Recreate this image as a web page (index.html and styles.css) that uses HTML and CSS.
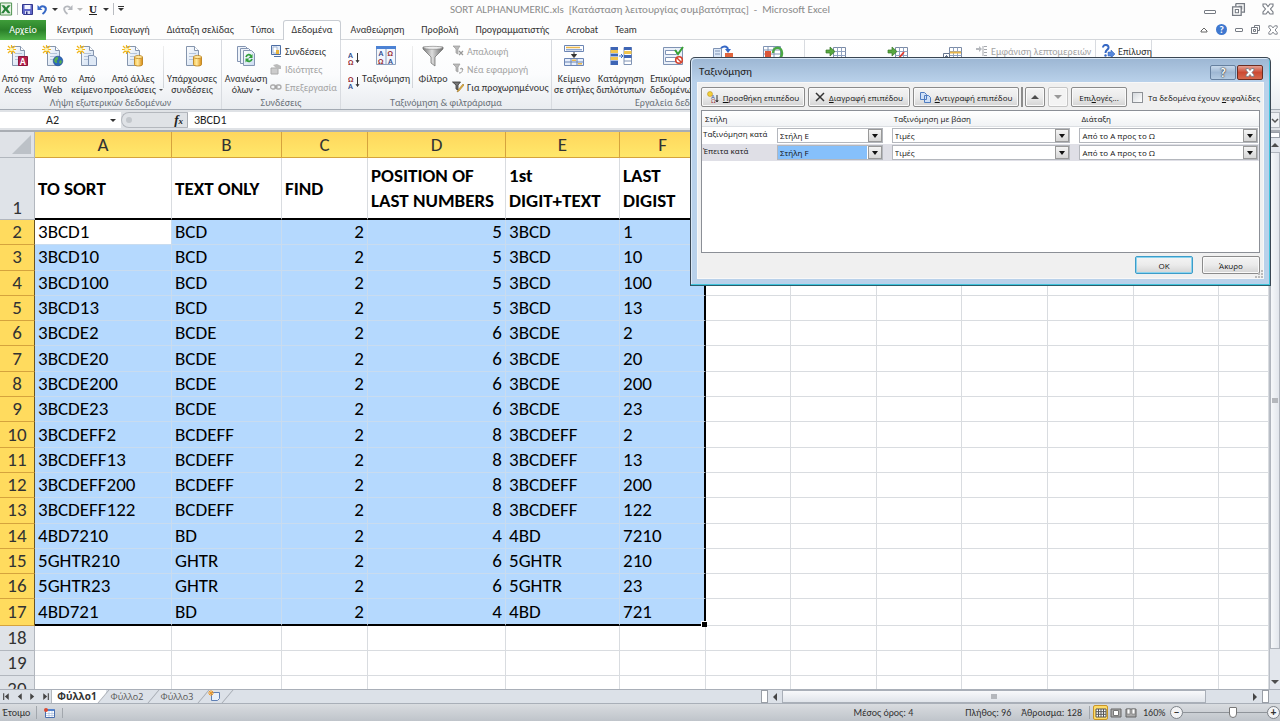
FILE: index.html
```html
<!DOCTYPE html>
<html lang="el">
<head>
<meta charset="utf-8">
<title>SORT ALPHANUMERIC.xls - Microsoft Excel</title>
<link rel="stylesheet" href="styles.css">
</head>
<body>
<svg class="defs" aria-hidden="true">
  <defs>
    <linearGradient id="pageFill" x1="0" y1="0" x2="1" y2="1"><stop offset="0" stop-color="#fff"/><stop offset="1" stop-color="#c9daf0"/></linearGradient>
    <linearGradient id="gold" x1="0" x2="1"><stop offset="0" stop-color="#f7c64f"/><stop offset=".4" stop-color="#ffe9a0"/><stop offset="1" stop-color="#d98c10"/></linearGradient>
    <linearGradient id="steel" x1="0" x2="1"><stop offset="0" stop-color="#777"/><stop offset=".45" stop-color="#ddd"/><stop offset="1" stop-color="#666"/></linearGradient>
    <symbol id="page" viewBox="0 0 22 22"><path d="M5.500 1.500h8l4 4v15h-12z" fill="url(#pageFill)" stroke="#8595ad"/><path d="M13.500 1.500v4h4" fill="#fff" stroke="#8595ad"/><path d="M8 8.500h7M8 11.500h7M8 14.500h7" stroke="#b4c4da"/></symbol>
    <symbol id="star" viewBox="0 0 22 22"><path d="M4.500 0v9M0 4.500h9M1 1l7 7M8 1l-7 7" stroke="#f1b51c" stroke-width="1.200"/><circle cx="4.500" cy="4.500" r="1.800" fill="#fff6b0"/></symbol>
    <symbol id="drum" viewBox="0 0 22 22"><path d="M12.500 12v7.500c0 2 8 2 8 0V12z" fill="url(#gold)" stroke="#b67a13" stroke-width=".8"/><ellipse cx="16.500" cy="12" rx="4" ry="1.600" fill="#ffe59a" stroke="#b67a13" stroke-width=".7"/></symbol>
    <symbol id="arrow" viewBox="0 0 22 22"><path d="M1 5h4V2l5 4.500L5 11V8H1z" fill="#58a83f" stroke="#37782a" stroke-width=".7"/></symbol>
    <symbol id="sheet" viewBox="0 0 22 22"><path d="M8.500 2.500h12v17h-12z" fill="#fff" stroke="#7b8ba6"/><path d="M8.500 6.500h12M8.500 10.500h12M8.500 14.500h12M12.500 2.500v17M16.500 2.500v17" stroke="#92a4c2"/></symbol>
    <symbol id="funnel" viewBox="0 0 22 22"><path d="M1 2h20v2l-8 8v9l-4-3v-6L1 4z" fill="url(#steel)" stroke="#777" stroke-width=".8"/><ellipse cx="11" cy="2.800" rx="9.500" ry="1.500" fill="#eee" stroke="#888" stroke-width=".6"/></symbol>
    <symbol id="sortAz" viewBox="0 0 12 14"><text x="0" y="6.500" font-size="8" font-weight="700" fill="#2d4b8c">Α</text><text x="0" y="14" font-size="8" font-weight="700" fill="#9b3238">Ω</text><path d="M9.500 2v9M8 9l1.500 2.500L11 9" stroke="#333" fill="none"/></symbol>
    <symbol id="sortZa" viewBox="0 0 12 14"><text x="0" y="6.500" font-size="8" font-weight="700" fill="#9b3238">Ω</text><text x="0" y="14" font-size="8" font-weight="700" fill="#2d4b8c">Α</text><path d="M9.500 2v9M8 9l1.500 2.500L11 9" stroke="#333" fill="none"/></symbol>
    <symbol id="restore" viewBox="0 0 14 14"><path d="M4.500 1.500h8v8h-3M4.500 1.500v3" fill="none" stroke="#767b83" stroke-width="1.200"/><path d="M1.500 4.500h8v8h-8z" fill="#fff" stroke="#767b83" stroke-width="1.200"/><path d="M4 7h3v3H4zM7 4h3v3" fill="none" stroke="#767b83"/></symbol>
    <symbol id="cross" viewBox="0 0 14 14"><path d="M2 2h3l2 2.500L9 2h3v2L9.500 7l2.500 3v2H9L7 9.500 5 12H2v-2l2.500-3L2 4z" fill="#fff" stroke="#767b83" stroke-width="1.100"/></symbol>
  </defs>
</svg>

<div class="app">
  <header class="titlebar">
    <div class="quick">
      <svg class="logo" viewBox="0 0 14 14"><path d="M.5.500h12v13H.5z" fill="#e7f2e4" stroke="#438b45"/><path d="M1.500 3l3 0 2 2.500L8.500 3h3L8 7l3.500 4.500h-3L6 8.500 4 11.500H1L4.500 7z" fill="#278238"/></svg>
      <i class="vline"></i>
      <button aria-label="Αποθήκευση"><svg width="11" height="11" viewBox="0 0 11 11"><path d="M.5.500h10v10h-9l-1-1z" fill="#5f66c7" stroke="#34398e"/><path d="M2.500 1h6v4h-6z" fill="#f4f6ff"/><path d="M3 7h5v3H3z" fill="#d7dcf5"/><path d="M4 7.500h1.500V10H4z" fill="#2c3180"/></svg></button>
      <button aria-label="Αναίρεση"><svg width="11" height="11" viewBox="0 0 11 11"><path d="M3 3.500C6 1 10 3 8.500 6.500 8 8 7 9 5.500 10" fill="none" stroke="#3567c5" stroke-width="2"/><path d="M.5 1v5h5z" fill="#3567c5"/></svg></button>
      <i class="caret"></i>
      <button aria-label="Επανάληψη"><svg width="11" height="11" viewBox="0 0 11 11"><path d="M8 3.500C5 1 1 3 2.500 6.500 3 8 4 9 5.500 10" fill="none" stroke="#b5b8bd" stroke-width="1.800"/><path d="M10.500 1v5h-5z" fill="#b5b8bd"/></svg></button>
      <i class="caret pale"></i>
      <button class="under" aria-label="Υπογράμμιση">U</button>
      <i class="caret"></i>
      <i class="vline"></i>
      <i class="caret bar"></i>
    </div>
    <h1>SORT ALPHANUMERIC.xls&nbsp; [Κατάσταση λειτουργίας συμβατότητας]&nbsp; -&nbsp; Microsoft Excel</h1>
    <div class="wincontrols">
      <button aria-label="Ελαχιστοποίηση"><i class="min"></i></button>
      <button aria-label="Επαναφορά"><svg width="15" height="15"><use href="#restore"/></svg></button>
      <button aria-label="Κλείσιμο"><svg width="14" height="14"><use href="#cross"/></svg></button>
    </div>
  </header>

  <nav class="tabs">
    <a href="#" class="file">Αρχείο</a>
    <a href="#">Κεντρική</a>
    <a href="#">Εισαγωγή</a>
    <a href="#">Διάταξη σελίδας</a>
    <a href="#">Τύποι</a>
    <a href="#" class="active">Δεδομένα</a>
    <a href="#">Αναθεώρηση</a>
    <a href="#">Προβολή</a>
    <a href="#">Προγραμματιστής</a>
    <a href="#">Acrobat</a>
    <a href="#">Team</a>
    <div class="doccontrols">
      <button aria-label="Σύμπτυξη κορδέλας"><svg width="8" height="8" viewBox="0 0 8 8"><path d="M1 5l3-3 3 3v1H1z" fill="#fff" stroke="#666"/></svg></button>
      <button class="help" aria-label="Βοήθεια">?</button>
      <button aria-label="Ελαχιστοποίηση βιβλίου"><i class="min"></i></button>
      <button aria-label="Επαναφορά βιβλίου"><svg width="9" height="9" viewBox="0 0 9 9"><path d="M3.500 2.500v-2h5v5h-2M.5 2.500h6v6h-6zM2.500 4.500h2v2h-2z" fill="#fff" stroke="#767b83"/></svg></button>
      <button aria-label="Κλείσιμο βιβλίου"><svg width="10" height="10" viewBox="1 1 12 12"><use href="#cross" width="14" height="14"/></svg></button>
    </div>
  </nav>

  <section class="ribbon">
    <div class="group g1">
      <div class="tools">
        <button class="big w36"><svg viewBox="0 0 22 22"><use href="#page"/><use href="#star"/><path d="M11.500 11.500h9v9h-9z" fill="#b5224f" stroke="#8b1539"/><text x="12.800" y="19.500" font-size="10" font-weight="700" fill="#fff">A</text></svg>Από την<br>Access</button>
        <button class="big w34"><svg viewBox="0 0 22 22"><use href="#page"/><use href="#star"/><circle cx="16" cy="16" r="4.800" fill="#2c67ba" stroke="#214c8c" stroke-width=".6"/><path d="M13 13c2-2 4-1 3 1s-2 1-1 3-2 1-3-1zM18 15l2 1-1 3-2-1z" fill="#55b04b"/></svg>Από το<br>Web</button>
        <button class="big w34"><svg viewBox="0 0 22 22"><use href="#page"/><use href="#star"/><path d="M12.500 10.500h5l3 2v8h-8z" fill="#dfe9f6" stroke="#7f93b3"/></svg>Από<br>κείμενο</button>
        <button class="big w58"><svg viewBox="0 0 22 22"><use href="#page"/><use href="#star"/><use href="#drum"/></svg>Από άλλες<br>προελεύσεις <i class="drop"></i></button>
        <i class="sep"></i>
        <button class="big w54"><svg viewBox="0 0 22 22"><use href="#page"/><use href="#drum"/></svg>Υπάρχουσες<br>συνδέσεις</button>
      </div>
      <div class="caption">Λήψη εξωτερικών δεδομένων</div>
    </div>
    <div class="group g2">
      <div class="tools">
        <button class="big w48"><svg viewBox="0 0 22 22"><path d="M2.500 1.500h8l3 3v12h-11z" fill="#eef3fa" stroke="#8495b2"/><path d="M5.500 3.500h8l3 3v12h-11z" fill="#eef3fa" stroke="#8495b2"/><path d="M8.500 5.500h8l3 3v12h-11z" fill="url(#pageFill)" stroke="#8495b2"/><path d="M11 12c1-3 4-3 5-1M17 14c-1 3-4 3-5 1" fill="none" stroke="#33a03c" stroke-width="1.800"/><path d="M17.500 9v4h-4zM10.500 17.500v-4h4z" fill="#33a03c"/></svg>Ανανέωση<br>όλων <i class="drop"></i></button>
        <div class="stack">
          <button><svg viewBox="0 0 12 12"><path d="M1.500.500h9v9h-9z" fill="#e4edf9" stroke="#4d6ea4"/><path d="M3 2h4v6H3z" fill="#fff" stroke="#7790b8" stroke-width=".6"/><path d="M6 5h3v4H6z" fill="#e8b33b"/><path d="M4 11.500h7" stroke="#4d6ea4"/></svg>Συνδέσεις</button>
          <button disabled><svg viewBox="0 0 12 12"><path d="M1 5h7v6H1z" fill="#ccc" stroke="#aaa"/><path d="M3 2l4-1 4 2v3H7L5 4z" fill="#bbb"/></svg>Ιδιότητες</button>
          <button disabled><svg viewBox="0 0 12 12"><rect x=".6" y="4" width="5" height="4" rx="2" fill="none" stroke="#aaa" stroke-width="1.300"/><rect x="6" y="4" width="5" height="4" rx="2" fill="none" stroke="#aaa" stroke-width="1.300"/><path d="M4 6h4" stroke="#999"/></svg>Επεξεργασία</button>
        </div>
      </div>
      <div class="caption">Συνδέσεις</div>
    </div>
    <div class="group g3">
      <div class="tools">
        <div class="sorts">
          <button aria-label="Αύξουσα ταξινόμηση"><svg width="12" height="14"><use href="#sortAz"/></svg></button>
          <button aria-label="Φθίνουσα ταξινόμηση"><svg width="12" height="14"><use href="#sortZa"/></svg></button>
        </div>
        <button class="big w50"><svg viewBox="0 0 22 22"><path d="M1.500 1.500h19v18h-19z" fill="#f2f6fd" stroke="#8da0bd"/><path d="M1 1h20v3H1z" fill="#4c82d4"/><path d="M11 4v15" stroke="#8da0bd"/><text x="3.500" y="11" font-size="8" font-weight="700" fill="#2d4b8c">Α</text><text x="3" y="18.500" font-size="8" font-weight="700" fill="#9b3238">Ω</text><text x="12.500" y="11" font-size="8" font-weight="700" fill="#9b3238">Ω</text><text x="13" y="18.500" font-size="8" font-weight="700" fill="#2d4b8c">Α</text></svg>Ταξινόμηση</button>
        <i class="sep"></i>
        <button class="big w38"><svg viewBox="0 0 22 22"><use href="#funnel"/></svg>Φίλτρο</button>
        <div class="stack">
          <button disabled><svg viewBox="0 0 12 12"><path d="M1 1h7L6 4v5L4 8V4z" fill="#bbb" stroke="#999" stroke-width=".7"/><path d="M7 6l4 4M11 6l-4 4" stroke="#999" stroke-width="1.300"/></svg>Απαλοιφή</button>
          <button disabled><svg viewBox="0 0 12 12"><path d="M1 1h7L6 4v5L4 8V4z" fill="#bbb" stroke="#999" stroke-width=".7"/><path d="M7 10c3 0 4-2 3-4M8 6l2-1 1 2" stroke="#999" fill="none"/></svg>Νέα εφαρμογή</button>
          <button><svg viewBox="0 0 12 12"><path d="M.5 1h8L6 4v5L4 8V4z" fill="#777" stroke="#333" stroke-width=".8"/><path d="M11 3L6 9l-1 2 2-1 5-6z" fill="#e8b83e" stroke="#8a5d14" stroke-width=".5"/></svg>Για προχωρημένους</button>
        </div>
      </div>
      <div class="caption">Ταξινόμηση &amp; φιλτράρισμα</div>
    </div>
    <div class="group g4">
      <div class="tools">
        <button class="big w44"><svg viewBox="0 0 22 22"><path d="M1.500.500h19v6h-19z" fill="#fff" stroke="#6b85b4"/><path d="M3 2.500h14" stroke="#e9b64b" stroke-width="1.500"/><path d="M3 4.800h16" stroke="#5e83c1"/><path d="M11 7v4M8.500 9.500l2.500 3 2.500-3z" stroke="#333" fill="#333"/><path d="M1.500 13.500h19v7h-19zM1.500 17h19M8 13.500v7M14 13.500v7" fill="#e6eefb" stroke="#6b85b4"/><path d="M9 15.200h4M15 18.800h4" stroke="#e9b64b" stroke-width="1.500"/></svg>Κείμενο<br>σε στήλες</button>
        <button class="big w50"><svg viewBox="0 0 22 22"><path d="M.5 2h7.500v18H.5z" fill="#3e65b5"/><path d="M.5 5h7.500v3H.5zM.5 12h7.500v3H.5z" fill="#f1c44d"/><path d="M.5 8.500h8M.5 15.500h8M.5 11.500h8" stroke="#d8e3f7" stroke-width=".7"/><path d="M9 11h3M11 9l2 2-2 2" stroke="#3268c5" fill="none"/><path d="M14 2.500h7.500v17H14z" fill="#fff" stroke="#8194b5"/><path d="M14 2h7.500v3H14z" fill="#3e65b5"/><path d="M14 6h7.500v3H14z" fill="#f1c44d"/><path d="M14 10h7.500v3H14z" fill="#3e65b5"/><path d="M14 16h7.500" stroke="#8194b5"/></svg>Κατάργηση<br>διπλότυπων</button>
        <button class="big w54"><svg viewBox="0 0 22 22"><path d="M1.500 2.500h19v17h-19z" fill="#eaf0f9" stroke="#7f93b3"/><path d="M3.500 5.500h11v4h-11zM3.500 12.500h11v4h-11z" fill="#fff" stroke="#8194b5"/><path d="M13 5l3 4 5-7" fill="none" stroke="#37a234" stroke-width="2"/><circle cx="17" cy="15" r="3.300" fill="#fff" stroke="#d4412c" stroke-width="1.600"/><path d="M15 13l4 4" stroke="#d4412c" stroke-width="1.400"/></svg>Επικύρωση<br>δεδομένων</button>
        <button class="big w46" aria-label="Συνάθροιση"><svg viewBox="0 0 22 22"><path d="M1.500 3.500h8v16h-8z" fill="#dce8f8" stroke="#7f93b3"/><path d="M3 6h5M3 9h5" stroke="#7f93b3"/><path d="M9 3c4-3 7-1 7 2" stroke="#3567c5" stroke-width="2" fill="none"/><path d="M13 4h6l-3 4z" fill="#3567c5"/><path d="M13 8h8v12h-8z" fill="#e0643c"/></svg></button>
        <button class="big w54" aria-label="Ανάλυση"><svg viewBox="0 0 22 22"><path d="M1.500 1.500h17v18h-17zM1.500 5h17M1.500 9h17M6 1v18M12 1v18" fill="#fff" stroke="#7f93b3"/><path d="M3 6h6v6H3z" fill="#dc5638"/><path d="M11 8c0-7 9-7 9 0s-4 4-5 8" stroke="#4aa744" stroke-width="2.500" fill="none"/></svg></button>
      </div>
      <div class="caption">Εργαλεία δεδομένων</div>
    </div>
    <div class="group g5">
      <div class="tools">
        <button class="big w62" aria-label="Ομαδοποίηση"><svg viewBox="0 0 22 22"><use href="#sheet"/><use href="#arrow"/></svg></button>
        <button class="big w62" aria-label="Κατάργηση ομαδοποίησης"><svg viewBox="0 0 22 22"><use href="#sheet"/><use href="#arrow"/><path d="M7 19L17 7" stroke="#e33b2f" stroke-width="1.800"/></svg></button>
        <button class="big w46" aria-label="Μερικό άθροισμα"><svg viewBox="0 0 22 22"><use href="#sheet"/><path d="M2.500 8.500h6v6h-6zM4 11.500h3M5.500 10v3" fill="#fff" stroke="#66758d"/><path d="M9 7.500h11" stroke="#e9b64b" stroke-width="2"/></svg></button>
        <div class="stack">
          <button disabled><svg viewBox="0 0 12 12"><path d="M0 3h3V1l3 3-3 3V5H0z" fill="#b5b8bd"/><path d="M8 1.500h3M8 4.500h3M8 7.500h3M8 10.500h3M7 1v10" stroke="#a5a8ad" fill="none"/></svg>Εμφάνιση λεπτομερειών</button>
        </div>
      </div>
    </div>
    <div class="group g6">
      <div class="tools">
        <div class="stack">
          <button><svg class="solve" viewBox="0 0 14 14"><path d="M2 3.500C2 0 8 0 7.500 4 7 6 4.500 6 4.500 9" fill="none" stroke="#3668c4" stroke-width="2"/><circle cx="4.500" cy="11.500" r="1.200" fill="#3668c4"/><path d="M7 8h3V6l4 4-4 4v-2H7z" fill="#5587dc" stroke="#2d5cb0" stroke-width=".5"/></svg>Επίλυση</button>
        </div>
      </div>
    </div>
  </section>

  <div class="formulabar">
    <label class="namebox"><input aria-label="Πλαίσιο ονόματος" value="A2"><i class="caret"></i></label>
    <div class="fxpad"><i class="knob"></i><button aria-label="Εισαγωγή συνάρτησης"><em>f</em>x</button></div>
    <input class="formula" aria-label="Γραμμή τύπων" value="3BCD1">
    <button class="expand" aria-label="Ανάπτυξη γραμμής τύπων"><svg width="8" height="6" viewBox="0 0 8 6"><path d="M1 1l3 3 3-3" fill="none" stroke="#555" stroke-width="1.500"/></svg></button>
  </div>

  <main class="work">
    <div class="gridwrap">
      <table class="grid">
        <colgroup><col class="c35"><col class="c137"><col class="c110"><col class="c86"><col class="c138"><col class="c114"><col class="c86"><col class="c85"><col class="c86"><col class="c85"><col class="c86"><col class="c86"><col class="c85"><col></colgroup>
        <thead><tr id="letters"></tr></thead>
        <tbody id="cells"></tbody>
      </table>
    </div>
    <div class="vscroll">
      <i class="split"></i>
      <button aria-label="Κύλιση επάνω"><i class="tri up"></i></button>
      <div class="thumb"><i class="grip"></i></div>
      <div class="rest"></div>
      <button aria-label="Κύλιση κάτω"><i class="tri down"></i></button>
    </div>
  </main>

  <div class="sheetbar">
    <div class="sheetnav">
      <button aria-label="Πρώτο φύλλο"><svg viewBox="0 0 8 8"><path d="M1.500 1v6" stroke="#444"/><path d="M6 1v6L2.500 4z" fill="#444"/></svg></button>
      <button aria-label="Προηγούμενο φύλλο"><svg viewBox="0 0 8 8"><path d="M6 1v6L2.500 4z" fill="#444"/></svg></button>
      <button aria-label="Επόμενο φύλλο"><svg viewBox="0 0 8 8"><path d="M2 1v6l3.500-3z" fill="#444"/></svg></button>
      <button aria-label="Τελευταίο φύλλο"><svg viewBox="0 0 8 8"><path d="M6.500 1v6" stroke="#444"/><path d="M2 1v6l3.500-3z" fill="#444"/></svg></button>
    </div>
    <a href="#" class="sheet current">Φύλλο1</a>
    <a href="#" class="sheet">Φύλλο2</a>
    <a href="#" class="sheet">Φύλλο3</a>
    <a href="#" class="sheet new" aria-label="Εισαγωγή φύλλου"><svg width="13" height="12" viewBox="0 0 13 12"><path d="M3.500 2.500h8v6l-2 2h-6z" fill="#e8f0fb" stroke="#5f7fb4"/><path d="M3 0v6M0 3h6M1 1l4 4M5 1L1 5" stroke="#ef9a28"/></svg></a>
    <div class="hscroll">
      <i class="split"></i>
      <button aria-label="Κύλιση αριστερά"><i class="tri left"></i></button>
      <div class="thumb"><i class="grip"></i></div>
      <div class="rest"></div>
      <button aria-label="Κύλιση δεξιά"><i class="tri right"></i></button>
      <i class="split"></i>
    </div>
  </div>

  <footer class="status">
    <span class="ready">Έτοιμο</span>
    <button class="macro" aria-label="Εγγραφή μακροεντολής"><svg width="11" height="10" viewBox="0 0 11 10"><path d="M1.500 1.500h9v8h-9z" fill="#fff" stroke="#4a6fae"/><path d="M1 1h9v2H1z" fill="#5384cf"/><path d="M2 5.500h8M2 7.500h8M5 3v6M8 3v6" stroke="#9fb6da" stroke-width=".6"/><circle cx="2" cy="2" r="2" fill="#d94a33"/></svg></button>
    <span class="avg">Μέσος όρος: 4</span>
    <span class="count">Πλήθος: 96</span>
    <span class="sum">Άθροισμα: 128</span>
    <div class="views">
      <button class="on" aria-label="Κανονική"><svg viewBox="0 0 12 10"><path d="M1 1h10v8H1zM1 3.700h10M1 6.300h10M3.500 1v8M6 1v8M8.500 1v8" fill="#fff" stroke="#555"/></svg></button>
      <button aria-label="Διάταξη σελίδας"><svg viewBox="0 0 12 10"><path d="M1 1h10v8H1z" fill="#aaa" stroke="#666"/><path d="M3.500 2.500h5v5h-5z" fill="#fff" stroke="#777"/></svg></button>
      <button aria-label="Προεπισκόπηση αλλαγών"><svg viewBox="0 0 12 10"><path d="M1 1h10v8H1z" fill="#aaa" stroke="#666"/><path d="M2 1h3v5H2zM7 1h3v5H7z" fill="#fff" stroke="#777" stroke-width=".7"/></svg></button>
    </div>
    <span class="pct">160%</span>
    <button class="zoombtn" aria-label="Σμίκρυνση">−</button>
    <input class="zoom" type="range" aria-label="Ζουμ" min="0" max="100" value="60">
    <button class="zoombtn" aria-label="Μεγέθυνση">+</button>
  </footer>

  <section class="dialog" role="dialog" aria-labelledby="dlgTitle">
    <div class="dlghead">
      <h2 id="dlgTitle">Ταξινόμηση</h2>
      <button class="q" aria-label="Βοήθεια διαλόγου">?</button>
      <button class="x" aria-label="Κλείσιμο διαλόγου"><svg width="12" height="11" viewBox="0 0 14 14"><use href="#cross"/></svg></button>
    </div>
    <div class="dlgbody">
      <div class="dlgtools">
        <button class="w104"><svg width="12" height="12" viewBox="0 0 12 12"><circle cx="3" cy="3" r="2.500" fill="#f3cf3a" stroke="#b28c12" stroke-width=".5"/><text x="4" y="8" font-size="6" fill="#2d4b8c">Α</text><text x="4" y="12" font-size="6" fill="#9b3238">Ω</text><path d="M10 4v7M8.800 9l1.200 2 1.200-2" stroke="#333" fill="none"/></svg><span><u>Π</u>ροσθήκη επιπέδου</span></button>
        <button class="w102"><svg width="10" height="10" viewBox="0 0 10 10"><path d="M1 1l8 8M9 1L1 9" stroke="#333" stroke-width="1.500"/></svg><span><u>Δ</u>ιαγραφή επιπέδου</span></button>
        <button class="w106"><svg width="11" height="11" viewBox="0 0 11 11"><path d="M.5.500h4l2 2v5h-6zM4.500 3.500h4l2 2v5h-6z" fill="#cfe0f7" stroke="#4f7cc0"/></svg><span><u>Α</u>ντιγραφή επιπέδου</span></button>
        <i class="bar"></i>
        <button class="w20" aria-label="Μετακίνηση επάνω"><i class="tri up"></i></button>
        <button class="w20" disabled aria-label="Μετακίνηση κάτω"><i class="tri down"></i></button>
        <button class="w56"><span>Επι<u>λ</u>ογές...</span></button>
        <label class="check"><input type="checkbox"><span>Τα δεδομένα έχουν <u>κ</u>εφαλίδες</span></label>
      </div>
      <div class="levels">
        <div class="level lhead"><span>Στήλη</span><span>Ταξινόμηση με βάση</span><span>Διάταξη</span></div>
        <div class="level">
          <label for="s1">Ταξινόμηση κατά</label>
          <span class="combo"><select id="s1"><option>Στήλη E</option></select><i class="pick"></i></span>
          <span class="combo"><select aria-label="Ταξινόμηση με βάση 1"><option>Τιμές</option></select><i class="pick"></i></span>
          <span class="combo"><select aria-label="Διάταξη 1"><option>Από το Α προς το Ω</option></select><i class="pick"></i></span>
        </div>
        <div class="level sel">
          <label for="s2">Έπειτα κατά</label>
          <span class="combo hot"><select id="s2"><option>Στήλη F</option></select><i class="pick"></i></span>
          <span class="combo"><select aria-label="Ταξινόμηση με βάση 2"><option>Τιμές</option></select><i class="pick"></i></span>
          <span class="combo"><select aria-label="Διάταξη 2"><option>Από το Α προς το Ω</option></select><i class="pick"></i></span>
        </div>
      </div>
      <div class="dlgfoot">
        <button class="ok">OK</button>
        <button>Άκυρο</button>
      </div>
      <svg class="resize" width="8" height="8" viewBox="0 0 8 8"><path d="M6 0h2v2H6zM3 3h2v2H3zM6 3h2v2H6zM0 6h2v2H0zM3 6h2v2H3zM6 6h2v2H6z" fill="#bbb"/></svg>
    </div>
  </section>
</div>
<script src="grid.js"></script>
</body>
</html>
```
FILE: styles.css
```css
* { box-sizing: border-box; }
body { margin: 0; font-family: Carlito, Calibri, "Open Sans", sans-serif; font-size: 10px; color: #333; background: #fff; overflow: hidden; }
button, input, select { font: inherit; color: inherit; margin: 0; }
button { padding: 0; border: 0; background: none; white-space: nowrap; }
a { color: inherit; text-decoration: none; }
i { display: block; flex: none; }
svg { flex: none; }
.defs { position: absolute; width: 0; height: 0; }
.app { position: relative; display: flex; flex-direction: column; height: 100vh; }

/* title bar */
.titlebar { flex: none; display: grid; grid-template-columns: 1fr auto 1fr; height: 20px; background: #fdfdfd; }
.titlebar h1 { margin: 0; font-size: 11px; font-weight: 400; line-height: 19px; color: #8b8b8b; white-space: nowrap; }
.quick { display: flex; align-items: center; gap: 4px; height: 18px; }
.quick button { display: flex; }
.logo { width: 13px; height: 14px; }
.vline { width: 1px; height: 12px; background: #b9bcc1; }
.caret { border: 3px solid transparent; border-top-color: #333; border-bottom: 0; }
.caret.pale { border-top-color: #bbb; }
.caret.bar::before { content: ""; display: block; position: absolute; width: 6px; height: 1px; background: #333; transform: translate(-3px, -5px); }
.quick .under { padding: 0 2px; font-family: "Liberation Serif", serif; font-size: 11px; font-weight: 700; text-decoration: underline; color: #222; }
.wincontrols { display: flex; justify-content: flex-end; align-items: center; gap: 15px; padding-right: 5px; height: 18px; }
.wincontrols button, .doccontrols button { display: flex; align-items: center; }
.min { width: 12px; height: 4px; border: 1px solid #767b83; border-radius: 1px; background: #fff; }
.wincontrols .min { margin-top: 5px; }

/* ribbon tabs */
.tabs { flex: none; display: flex; height: 20px; line-height: 20px; background: #fdfdfd; border-bottom: 1px solid #d4d7db; }
.tabs a { height: 20px; padding: 0 8px 0 9px; white-space: nowrap; }
.tabs .file { width: 46px; margin-right: 2px; padding: 0; text-align: center; color: #fff; background: linear-gradient(#3f9d3a, #2a8029 50%, #4fb448); }
.tabs .active { padding: 0 8px; background: #fff; border: 1px solid #c9cdd3; border-bottom: 0; border-radius: 3px 3px 0 0; line-height: 18px; }
.doccontrols { flex: 1; display: flex; justify-content: flex-end; align-items: center; gap: 8px; padding-right: 2px; }
.doccontrols .min { width: 8px; }
.doccontrols .help { display: block; width: 11px; height: 11px; border-radius: 50%; background: #3f78cf; color: #fff; font-weight: 700; line-height: 11px; text-align: center; }

/* ribbon */
.ribbon { flex: none; display: flex; height: 70px; background: linear-gradient(#fff, #fbfcfd 50%, #e9ecf0); border-bottom: 1px solid #a3aab3; overflow: hidden; }
.group { flex: none; display: flex; flex-direction: column; border-right: 1px solid #d8dbe0; }
.g1 { width: 222px; }
.g2 { width: 119px; }
.g3 { width: 211px; }
.g4 { width: 253px; }
.g5 { width: 291px; }
.g6 { width: 56px; }
.tools { display: flex; height: 57px; }
.caption { line-height: 12px; text-align: center; color: #6b7279; white-space: nowrap; }
.big { display: block; flex: none; line-height: 11px; padding-top: 5px; text-align: center; align-self: flex-start; }
.big > svg { display: block; width: 22px; height: 22px; margin: 0 auto 6px; }
.w34 { width: 34px; } .w36 { width: 36px; } .w38 { width: 38px; } .w44 { width: 44px; }
.w46 { width: 46px; } .w48 { width: 48px; } .w50 { width: 50px; } .w54 { width: 54px; }
.w58 { width: 58px; } .w62 { width: 62px; }
.drop { display: inline-block; border: 2px solid transparent; border-top-color: #555; border-bottom: 0; vertical-align: 2px; margin-left: 1px; }
.sep { width: 1px; height: 42px; margin: 6px 1px 0; background: linear-gradient(#eee, #cfd3d8); }
.stack { padding-top: 2px; }
.stack button { display: flex; align-items: center; gap: 3px; height: 18px; }
.stack svg { width: 12px; height: 12px; }
.stack .solve { width: 14px; height: 14px; }
.stack button:disabled { color: #a4a4a4; }
.sorts { display: flex; flex-direction: column; gap: 10px; padding: 11px 0 0 6px; width: 20px; }
.sorts button { height: 14px; }
.g5 .stack { padding-left: 1px; }
.g6 .stack { padding-left: 5px; }

/* formula bar */
.formulabar { flex: none; display: flex; height: 22px; padding: 2px 0; background: #dfe2e6; border-bottom: 2px solid #a9adb3; font-size: 12px; color: #222; }
.formulabar input { border: 0; background: #fff; outline: 0; padding: 0; min-width: 0; }
.namebox { display: flex; align-items: center; width: 121px; background: #fff; }
.namebox input { flex: 1; padding-right: 5px; text-align: center; }
.namebox .caret { margin-right: 5px; }
.fxpad { display: flex; align-items: center; justify-content: space-between; width: 67px; padding: 0 4px; border: 1px solid #b4b8be; border-right: 1px solid #a9adb3; border-radius: 9px 0 0 9px; }
.knob { width: 6px; height: 6px; border-radius: 50%; background: #c3c7cc; }
.fxpad button { font: italic 700 9px "Liberation Serif", serif; }
.fxpad em { font-size: 13px; }
.formulabar .formula { flex: 1; padding-left: 6px; }
.expand { width: 10px; background: #eef0f3; border: 1px solid #b4b8be; }

/* worksheet */
.work { flex: 1; min-height: 0; display: flex; }
.gridwrap { flex: 1; min-width: 0; overflow: hidden; }
.grid { table-layout: fixed; width: 100%; height: 570px; border-collapse: separate; border-spacing: 0; font-size: 19px; line-height: 22px; color: #000; }
.c35 { width: 35px; } .c85 { width: 85px; } .c86 { width: 86px; } .c110 { width: 110px; }
.c114 { width: 114px; } .c137 { width: 137px; } .c138 { width: 138px; }
.grid th, .grid td { padding: 0; border: 0 solid #d9dce0; border-width: 0 1px 1px 0; text-align: left; white-space: nowrap; }
.grid thead th { height: 26px; font-weight: 400; text-align: center; color: #333; background: linear-gradient(#f2f4f6, #dde1e7); border-color: #b2b7be; }
.grid thead .hot { background: linear-gradient(#ffd65c, #ffe86b); border-color: #d5a33d; }
.grid thead .corner { background: #dfe2e7; }
.corner::after { content: ""; display: block; width: 0; margin-left: 12px; border-bottom: 19px solid #bcc1c7; border-left: 19px solid transparent; }
.grid tbody th { font-weight: 400; text-align: center; color: #333; background: #dfe3e8; border-color: #b2b7be; }
.grid tbody th.hot { background: #ffdb5e; border-color: #d5a33d; border-right-color: #6b5420; }
.grid .titles th, .grid .titles td { height: 62px; }
.grid .titles th { vertical-align: bottom; }
.grid .titles td { padding-left: 3px; font-weight: 700; line-height: 25px; }
.grid .titles .edge { border-bottom: 2px solid #000; }
.grid .data { padding: 0 3px; background: #b5d9fe; border-color: #c9dcef; }
.grid .data.num { text-align: right; }
.grid .data.active { background: #fff; }
.grid .data.last { border-right: 2px solid #000; }
.grid .bottom .data { border-bottom: 2px solid #000; }
.bottom .last { position: relative; }
.bottom .last::after { content: ""; position: absolute; right: -3px; bottom: -3px; width: 5px; height: 5px; background: #000; border: solid #fff; border-width: 1px 0 0 1px; }

/* scroll bars */
.vscroll { flex: none; display: flex; flex-direction: column; width: 11px; background: #e2e6ec; border-left: 1px solid #b9bec6; }
.vscroll button { display: flex; justify-content: center; align-items: center; height: 14px; }
.vscroll .split { height: 6px; border: 1px solid #999ea6; background: #fff; }
.vscroll .thumb { flex: 19 1 0; display: flex; align-items: center; justify-content: center; background: linear-gradient(90deg, #f6f8fa, #e2e6ec); border: 1px solid #b0b5bd; }
.vscroll .rest { flex: 1 1 0; }
.grip { width: 6px; height: 5px; background: #b4b7bc; }
.tri { border: 4px solid transparent; }
.tri.up { border-bottom-color: #4d4d4d; border-top: 0; }
.tri.down { border-top-color: #4d4d4d; border-bottom: 0; }
.tri.left { border-right-color: #444; border-left: 0; }
.tri.right { border-left-color: #444; border-right: 0; }
.sheetbar { flex: none; display: flex; height: 15px; background: #dce1e8; border-top: 1px solid #a9afb8; border-bottom: 1px solid #a9afb8; font-family: "Open Sans", sans-serif; font-size: 9px; line-height: 13px; }
.sheetnav { display: flex; gap: 1px; width: 52px; border-right: 1px solid #b4b8be; }
.sheetnav button { width: 12px; }
.sheetnav svg { display: block; width: 9px; height: 9px; margin: auto; }
.sheet { position: relative; width: 50px; text-align: center; color: #555; }
.sheet::after { content: ""; position: absolute; right: -2px; top: 0; width: 1px; height: 13px; background: #a3a8b0; transform: skewX(-40deg); }
.sheet.current { width: 54px; margin-right: -4px; padding-right: 4px; background: linear-gradient(130deg, #fff 88%, transparent 89%); color: #333; font-weight: 700; font-size: 10px; }
.sheet.current::after { right: 2px; }
.sheet.new { width: 24px; }
.sheet.new svg { display: block; margin: 0 0 0 6px; }
.hscroll { display: flex; width: 519px; margin-left: auto; padding-right: 11px; }
.hscroll .split { width: 7px; border: 1px solid #999ea6; background: #fff; }
.hscroll button { width: 14px; display: flex; align-items: center; justify-content: center; }
.hscroll .thumb { flex: 10 1 0; display: flex; align-items: center; justify-content: center; background: linear-gradient(#f8f9fb, #e0e4ea); border: 1px solid #a9afb8; }
.hscroll .rest { flex: 1 1 0; }

/* status bar */
.status { flex: none; display: flex; align-items: center; height: 17px; background: linear-gradient(#d9dce0, #bfc4ca); color: #333; white-space: nowrap; }
.ready { width: 37px; padding-left: 3px; border-right: 1px solid #a2a7ad; }
.macro { display: flex; width: 26px; padding-left: 7px; border-right: 1px solid #a2a7ad; }
.avg { margin-left: auto; margin-right: 52px; }
.count { margin-right: 10px; }
.sum { padding-right: 7px; border-right: 1px solid #a2a7ad; }
.views { display: flex; margin: 0 5px 0 3px; }
.views button { display: flex; align-items: center; justify-content: center; width: 15px; height: 15px; }
.views svg { width: 12px; height: 10px; }
.views .on { border: 1px solid #c99526; border-radius: 2px; background: #ffdc68; }
.pct { width: 27px; }
.zoombtn { width: 13px; height: 13px; border: 1px solid #7c8187; border-radius: 50%; background: #f2f3f5; font-size: 11px; font-weight: 700; line-height: 10px; }
.zoom { appearance: none; width: 84px; height: 13px; background: linear-gradient(#8f949a, #8f949a) center / 100% 1px no-repeat; }
.zoom::-webkit-slider-thumb { appearance: none; width: 8px; height: 11px; border: 1px solid #777; border-radius: 1px 1px 4px 4px; background: #fff; }

/* sort dialog */
.dialog { position: absolute; top: 57px; right: 9px; width: 581px; padding: 0 6px 6px; border: 1px solid #3a4652; border-bottom-color: #2a5d6b; border-radius: 5px 5px 0 0; background: linear-gradient(#9cb6d3, #b9d1ea 24px, #b9d1ea); box-shadow: inset -1px -1px #40c4dc, inset 1px 1px #d9e8f7; color: #222; }
.dlghead { display: flex; height: 24px; }
.dlghead h2 { flex: 1; margin: 0; padding-left: 2px; font-size: 11px; font-weight: 400; line-height: 28px; }
.dlghead button { display: flex; align-items: center; justify-content: center; width: 26px; height: 15px; margin: 7px 1px 0 0; border: 1px solid #66809f; border-radius: 2px; background: linear-gradient(#c8d9eb, #9fb8d4 50%, #b4cbe2); color: #fff; font-weight: 700; font-size: 12px; line-height: 12px; text-shadow: 0 0 1px #222, 0 0 2px #222; }
.dlghead .x { border-color: #6b2c22; background: linear-gradient(#e5a194, #cc4a33 50%, #d6694e); }
.dlgbody { position: relative; padding: 4px 3px; background: #f0f0f0; border: 1px solid #f8f8f8; font-family: "Open Sans", sans-serif; font-size: 8px; color: #111; }
.dlgtools { display: flex; gap: 3px; height: 20px; }
.dlgtools button, .dlgfoot button { display: flex; flex: none; align-items: center; justify-content: center; gap: 4px; border: 1px solid #8b8b8b; border-radius: 2px; background: linear-gradient(#f4f4f4, #ebebeb 50%, #d4d4d4); box-shadow: inset 0 0 0 1px #fafafa; }
.dlgtools button:disabled { border-color: #c4c4c4; background: #f3f3f3; }
.dlgtools button:disabled .tri { border-top-color: #999; }
.w20 { width: 20px; } .w56 { width: 56px; } .w102 { width: 102px; } .w104 { width: 104px; } .w106 { width: 106px; }
.dlgtools .bar { width: 2px; margin: 0 -1px; background: #8b8b8b; }
.check { display: flex; align-items: center; gap: 5px; margin-left: auto; white-space: nowrap; }
.check input { appearance: none; width: 11px; height: 11px; border: 1px solid #8d9196; background: linear-gradient(135deg, #d5d9dd, #fff); }
.levels { height: 143px; margin-top: 3px; border: 1px solid #8b8f96; background: #fff; }
.level { display: grid; grid-template-columns: 65px 106fr 179fr 179fr; column-gap: 9px; height: 17px; padding: 1px; line-height: 12px; white-space: nowrap; }
.level .combo { position: relative; display: flex; border: 1px solid #b4b7bd; background: #fff; }
.level.sel { background: #dfdfe6; }
.lhead { height: 16px; padding: 0 1px; line-height: 15px; background: linear-gradient(#fff, #f1f3f5); border-bottom: 1px solid #dcdfe3; }
.lhead span { padding-left: 2px; }
.lhead span:first-child { grid-column: span 2; }
.combo select { flex: 1; min-width: 0; appearance: none; border: 0; padding: 0 2px; background: transparent; line-height: 13px; outline: 0; }
.combo.hot select { margin: 0 15px 0 0; background: #86c0fb; }
.pick { position: absolute; right: 0; top: 0; bottom: 0; display: flex; width: 14px; align-items: center; justify-content: center; border: 1px solid #999; background: linear-gradient(#f4f4f4, #d6d6d6); pointer-events: none; }
.pick::after { content: ""; border: 3px solid transparent; border-top: 4px solid #111; border-bottom: 0; }
.dlgfoot { display: flex; justify-content: flex-end; gap: 9px; margin-top: 3px; }
.dlgfoot button { width: 58px; height: 18px; }
.dlgfoot .ok { border-color: #3c9cc9; box-shadow: inset 0 0 0 1px #8bd3ee; }
.resize { position: absolute; right: 0; bottom: 0; }
```
FILE: grid.js
```js
const rows = [
  ["3BCD1", "BCD", 2, 5, "3BCD", "1"],
  ["3BCD10", "BCD", 2, 5, "3BCD", "10"],
  ["3BCD100", "BCD", 2, 5, "3BCD", "100"],
  ["3BCD13", "BCD", 2, 5, "3BCD", "13"],
  ["3BCDE2", "BCDE", 2, 6, "3BCDE", "2"],
  ["3BCDE20", "BCDE", 2, 6, "3BCDE", "20"],
  ["3BCDE200", "BCDE", 2, 6, "3BCDE", "200"],
  ["3BCDE23", "BCDE", 2, 6, "3BCDE", "23"],
  ["3BCDEFF2", "BCDEFF", 2, 8, "3BCDEFF", "2"],
  ["3BCDEFF13", "BCDEFF", 2, 8, "3BCDEFF", "13"],
  ["3BCDEFF200", "BCDEFF", 2, 8, "3BCDEFF", "200"],
  ["3BCDEFF122", "BCDEFF", 2, 8, "3BCDEFF", "122"],
  ["4BD7210", "BD", 2, 4, "4BD", "7210"],
  ["5GHTR210", "GHTR", 2, 6, "5GHTR", "210"],
  ["5GHTR23", "GHTR", 2, 6, "5GHTR", "23"],
  ["4BD721", "BD", 2, 4, "4BD", "721"]
];
const titles = ["TO SORT", "TEXT ONLY", "FIND", "POSITION OF<br>LAST NUMBERS", "1st<br>DIGIT+TEXT", "LAST<br>DIGIST"];
const blanks = "<td></td>".repeat(7);

document.getElementById("letters").innerHTML = '<th class="corner"></th>' +
  [..."ABCDEFGHIJKLM"].map((c, i) => `<th class="${i < 6 ? "hot" : ""}">${i < 6 ? c : ""}</th>`).join("");

let html = `<tr class="titles"><th>1</th>${titles.map(t => `<td class="edge">${t}</td>`).join("")}${blanks}</tr>`;
rows.forEach((row, r) => {
  const cells = row.map((v, c) => {
    const cls = ["data"];
    if (typeof v === "number") cls.push("num");
    if (r === 0 && c === 0) cls.push("active");
    if (c === 5) cls.push("last");
    return `<td class="${cls.join(" ")}">${v}</td>`;
  }).join("");
  html += `<tr class="${r === rows.length - 1 ? "bottom" : ""}"><th class="hot">${r + 2}</th>${cells}${blanks}</tr>`;
});
for (let n = 18; n <= 20; n++) {
  html += `<tr><th>${n}</th>${"<td></td>".repeat(6)}${blanks}</tr>`;
}
document.getElementById("cells").innerHTML = html;
```
